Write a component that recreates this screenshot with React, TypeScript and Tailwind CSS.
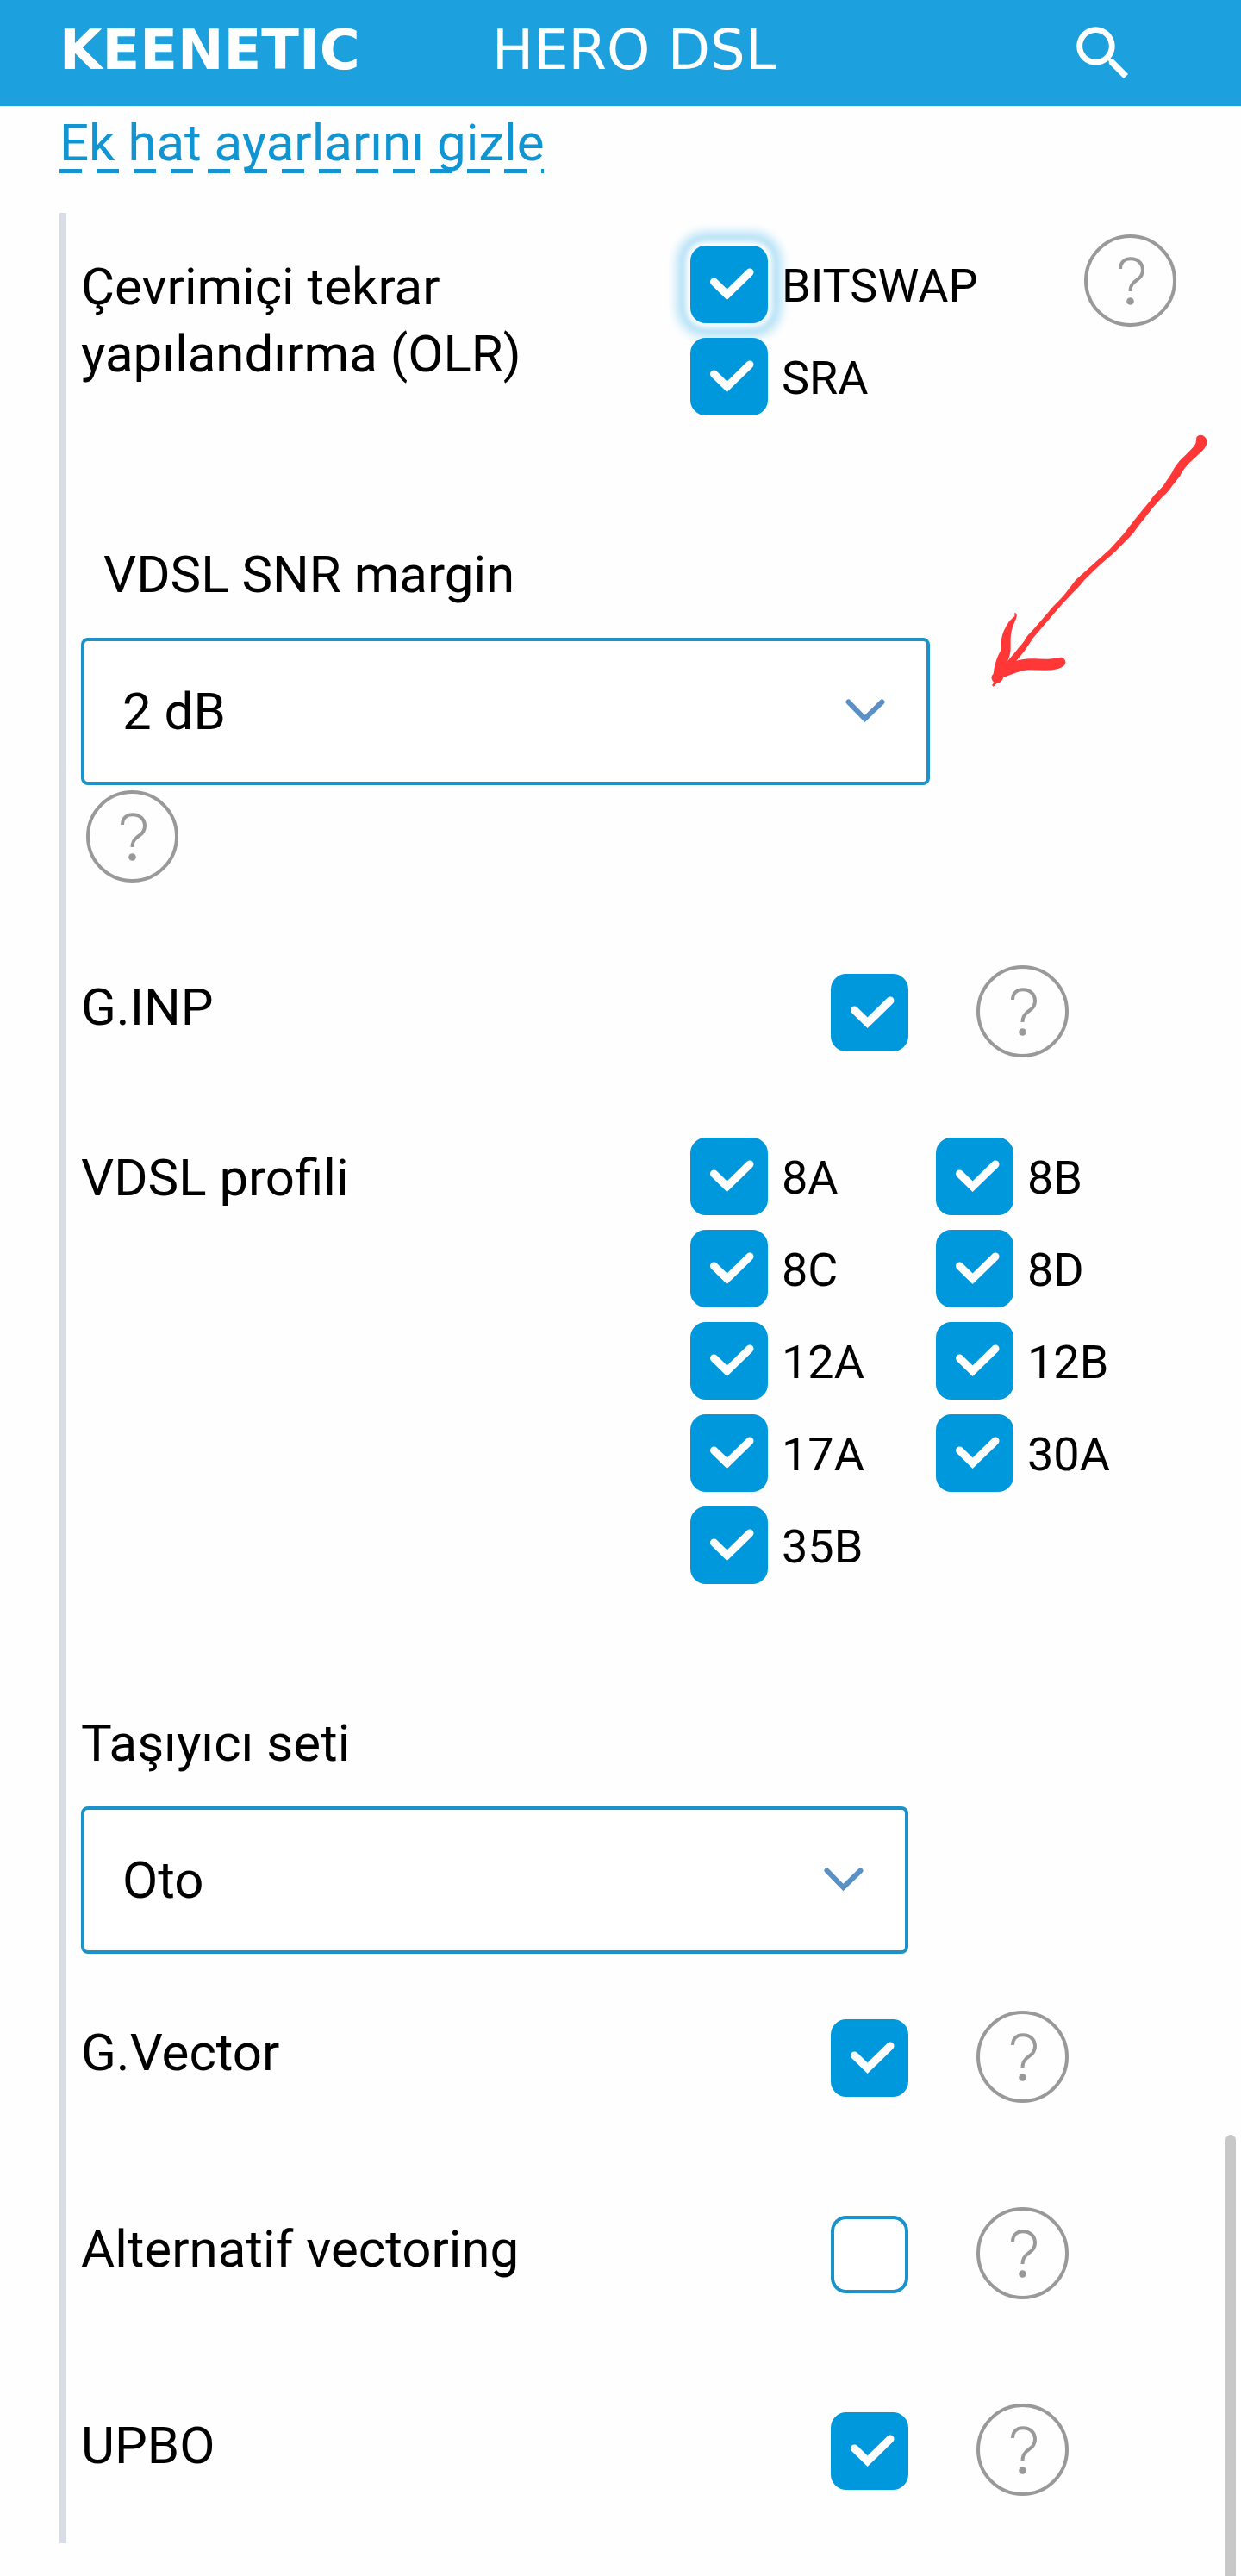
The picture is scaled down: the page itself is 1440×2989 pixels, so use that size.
import { useState } from "react";
import { MdSearch } from "react-icons/md";

const profiles = ["8A", "8B", "8C", "8D", "12A", "12B", "17A", "30A", "35B"];

function Checkbox({
  id,
  initial = true,
  glow = false,
}: {
  id: string;
  initial?: boolean;
  glow?: boolean;
}) {
  const [checked, setChecked] = useState(initial);
  return (
    <span className="grid shrink-0">
      <input
        id={id}
        type="checkbox"
        checked={checked}
        onChange={(e) => setChecked(e.target.checked)}
        className={
          "col-start-1 row-start-1 size-[90px] appearance-none rounded-[18px] border-4 border-[#1a92cb] bg-white checked:border-[#0098dc] checked:bg-[#0098dc] " +
          (glow ? "shadow-[0_0_6px_5px_#ffffff,0_0_12px_16px_#b3e1f6]" : "")
        }
      />
      {checked && (
        <svg
          viewBox="0 0 90 90"
          className="pointer-events-none z-10 col-start-1 row-start-1 size-[90px]"
          fill="none"
          stroke="white"
          strokeWidth="9"
          strokeLinecap="round"
          aria-hidden="true"
        >
          <path d="M27.5 42L42.6 56.8L69 31" />
        </svg>
      )}
    </span>
  );
}

function Option({ name, glow }: { name: string; glow?: boolean }) {
  const id = "opt-" + name.toLowerCase();
  return (
    <div className="flex items-center gap-4">
      <Checkbox id={id} glow={glow} />
      <label htmlFor={id} className="z-10 pt-1 text-[54px] leading-[64px]">
        {name}
      </label>
    </div>
  );
}

function Help({ topic }: { topic: string }) {
  return (
    <button
      type="button"
      aria-label={"Yardım: " + topic}
      className="block size-[107px] shrink-0"
    >
      <svg viewBox="0 0 107 107" fill="none" stroke="#999999" strokeWidth="4" aria-hidden="true">
        <circle cx="53.5" cy="53.5" r="51.5" />
        <path d="M42 40C42 32 47 28.2 54 28.2C62.5 28.2 68 34 68 41.5C68 47 65 50.5 61 53C56.5 56 53.5 59 53.5 66" />
        <circle cx="53.5" cy="77.5" r="4.3" fill="#999999" stroke="none" />
      </svg>
    </button>
  );
}

function Dropdown({
  id,
  options,
  className,
}: {
  id: string;
  options: string[];
  className: string;
}) {
  return (
    <div className={"relative " + className}>
      <select
        id={id}
        className="h-[171px] w-full appearance-none rounded-lg border-4 border-[#1d92c8] bg-white pr-[110px] pl-11 text-[60px]"
      >
        {options.map((o) => (
          <option key={o}>{o}</option>
        ))}
      </select>
      <svg
        viewBox="0 0 46 28"
        className="pointer-events-none absolute top-[71px] right-[52px] h-[28px] w-[46px]"
        fill="none"
        stroke="#5b90c4"
        strokeWidth="6"
        strokeLinecap="round"
        aria-hidden="true"
      >
        <path d="M3.5 3.5L22.5 23L42.5 3.5" />
      </svg>
    </div>
  );
}

function ToggleRow({ id, label, initial }: { id: string; label: string; initial?: boolean }) {
  return (
    <div className="flex items-start gap-[79px]">
      <div className="flex max-w-[960px] grow items-start justify-between pt-[10px]">
        <label htmlFor={id}>{label}</label>
        <Checkbox id={id} initial={initial} />
      </div>
      <Help topic={label} />
    </div>
  );
}

function RedArrow() {
  return (
    <svg
      viewBox="0 0 1020 1020"
      className="pointer-events-none absolute top-[-148px] right-0 size-[340px]"
      fill="#ff3737"
      aria-hidden="true"
    >
      <path d="M865 82C872 70 893 72 900 90C905 105 895 122 880 134L848 164C830 180 815 200 808 217L780 252C768 270 758 280 748 288L715 325L662 392C652 405 645 418 632 430L580 482L525 530L474 580C462 596 452 608 440 618L400 660L350 718L297 780L265 828L238 860C270 851 300 852 340 854C365 854 375 850 390 848C410 848 415 870 402 879C385 889 370 893 340 893L280 892C245 895 220 910 193 918C188 932 180 938 170 938L158 950L153 945L160 936C150 925 148 915 158 905C162 870 172 845 183 825C184 800 185 770 200 745C212 722 220 715 232 706L232 693L238 695C242 706 236 715 228 735C216 765 218 790 218 815C218 835 212 850 208 860L230 835C245 815 255 805 265 792C272 775 285 765 300 748L350 690C365 670 390 648 405 630L445 578C460 565 475 552 490 538L565 470L612 418L655 362L708 298C715 285 730 272 748 253L780 205C785 190 795 178 806 164L835 136C850 122 862 108 863 100Z" />
    </svg>
  );
}

export default function App() {
  return (
    <div className="relative min-h-screen bg-[#fefefe] pb-[38px] font-['Roboto',sans-serif] text-[60px] leading-[78px] text-black">
      <header className="flex h-[123px] items-center bg-[#1ca0de] pr-[119px] pb-2 pl-[69px] font-['DejaVu_Sans',sans-serif] text-[64px] text-white">
        <span className="w-[502px] font-bold">KEENETIC</span>
        <span className="grow">HERO DSL</span>
        <button type="button" aria-label="Ara" className="pt-2">
          <MdSearch className="size-[82px]" />
        </button>
      </header>

      <main>
        <a
          href="#line-settings"
          className="mt-1 ml-[69px] inline-block bg-[linear-gradient(to_right,#1593d0_26px,transparent_26px)] bg-[length:43px_5px] bg-[position:0_69px] bg-repeat-x align-top text-[#1194d2]"
        >
          Ek hat ayarlarını gizle
        </a>

        <section
          id="line-settings"
          className="mt-[42px] ml-[69px] border-l-8 border-[#d7dce5] pt-[25px] pb-[55px] pl-[17px]"
        >
          <div className="flex items-start pr-[75px]">
            <h2 className="w-[707px] pt-[22px]">
              Çevrimiçi tekrar
              <br />
              yapılandırma (OLR)
            </h2>
            <div className="flex grow flex-col gap-[17px] pt-[13px]">
              <Option name="BITSWAP" glow />
              <Option name="SRA" />
            </div>
            <Help topic="OLR" />
          </div>

          <div className="relative mt-[146px]">
            <label htmlFor="snr" className="ml-[26px] block">
              VDSL SNR margin
            </label>
            <Dropdown
              id="snr"
              options={["2 dB", "3 dB", "4 dB"]}
              className="mt-[34px] max-w-[985px]"
            />
            <div className="mt-[6px] ml-[6px]">
              <Help topic="VDSL SNR margin" />
            </div>
            <RedArrow />
          </div>

          <div className="mt-24">
            <ToggleRow id="ginp" label="G.INP" />
          </div>

          <div className="mt-[93px] flex items-start">
            <h2 className="w-[707px] pt-2">VDSL profili</h2>
            <div className="grid grid-cols-[285px_auto] gap-y-[17px]">
              {profiles.map((p) => (
                <Option key={p} name={p} />
              ))}
            </div>
          </div>

          <div className="mt-[146px]">
            <label htmlFor="carrier" className="block">
              Taşıyıcı seti
            </label>
            <Dropdown
              id="carrier"
              options={["Oto", "A43", "B43"]}
              className="mt-[34px] max-w-[960px]"
            />
          </div>

          <div className="mt-[66px] flex flex-col gap-[121px]">
            <ToggleRow id="gvector" label="G.Vector" />
            <ToggleRow id="altvec" label="Alternatif vectoring" initial={false} />
            <ToggleRow id="upbo" label="UPBO" />
          </div>
        </section>
      </main>

      <div className="absolute right-[6px] bottom-0 h-[512px] w-3 rounded-t-full bg-[#c8c8c8]" />
    </div>
  );
}
